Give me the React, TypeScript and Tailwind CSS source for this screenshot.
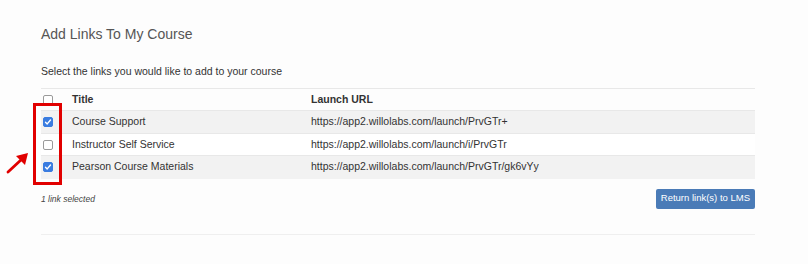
import React, { useState } from 'react';

const links = [
  { title: 'Course Support', url: 'https://app2.willolabs.com/launch/PrvGTr+', checked: true },
  { title: 'Instructor Self Service', url: 'https://app2.willolabs.com/launch/i/PrvGTr', checked: false },
  { title: 'Pearson Course Materials', url: 'https://app2.willolabs.com/launch/PrvGTr/gk6vYy', checked: true },
];

function Check({ checked, onClick }: { checked: boolean; onClick?: () => void }) {
  return (
    <span
      onClick={onClick}
      className={`flex h-[10px] w-[10px] items-center justify-center rounded-[2px] border ${
        checked ? 'border-[#3a7ce0] bg-[#3a7ce0]' : 'border-[#9a9a9a] bg-white'
      }`}
    >
      {checked && (
        <svg width="8" height="8" viewBox="0 0 8 8">
          <path d="M1.5 4.2 L3.2 5.9 L6.5 2" fill="none" stroke="white" strokeWidth="1.4" strokeLinecap="round" strokeLinejoin="round" />
        </svg>
      )}
    </span>
  );
}

export default function App() {
  const [rows, setRows] = useState(links);

  const toggle = (index: number) => {
    setRows(prev => prev.map((row, i) => (i === index ? { ...row, checked: !row.checked } : row)));
  };

  return (
    <div className="w-[808px] h-[264px] bg-[#fdfdfd] font-['Liberation_Sans',Arial,sans-serif] text-[#333]">
      <div className="relative ml-[41px] w-[714px] pt-[26px]">
        <h2 className="text-[14px] leading-[17px] text-[#555]">Add Links To My Course</h2>
        <p className="mt-[22px] text-[10.5px] leading-[13px] text-[#333]">Select the links you would like to add to your course</p>

        <table className="mt-[10px] w-full border-collapse text-[10.5px]">
          <thead>
            <tr className="h-[22px] border-t border-[#e8e8e8]">
              <th className="w-[31px] pl-[2px] text-left align-middle">
                <Check checked={false} />
              </th>
              <th className="w-[239px] text-left font-bold">Title</th>
              <th className="text-left font-bold">Launch URL</th>
            </tr>
          </thead>
          <tbody>
            {rows.map((row, index) => (
              <tr
                key={row.title}
                className={`${index === 1 ? 'h-[22px]' : 'h-[23px]'} border-t border-[#e8e8e8] ${
                  index % 2 === 0 ? 'bg-[#f2f2f2]' : 'bg-white'
                }`}
              >
                <td className="pl-[2px] align-middle">
                  <Check checked={row.checked} onClick={() => toggle(index)} />
                </td>
                <td>{row.title}</td>
                <td>{row.url}</td>
              </tr>
            ))}
          </tbody>
        </table>

        <div className="mt-[10px] flex items-start justify-between">
          <span className="mt-[4px] text-[8.5px] italic text-[#444]">1 link selected</span>
          <button className="h-[20px] rounded-[2px] bg-[#4a7bb7] px-[5px] text-[9.5px] text-white">
            Return link(s) to LMS
          </button>
        </div>

        <div className="mt-[25px] border-t border-[#efefef]" />

        {/* annotation overlay */}
        <div className="absolute left-[-8px] top-[103px] h-[82px] w-[29px] border-[3px] border-[#e10000]" />
        <svg className="absolute left-[-35px] top-[152px]" width="24" height="22" viewBox="0 0 24 22">
          <line x1="2" y1="20" x2="16" y2="7" stroke="#e10000" strokeWidth="2.8" strokeLinecap="round" />
          <polygon points="22,1 10,4 19,13" fill="#e10000" />
        </svg>
      </div>
    </div>
  );
}
